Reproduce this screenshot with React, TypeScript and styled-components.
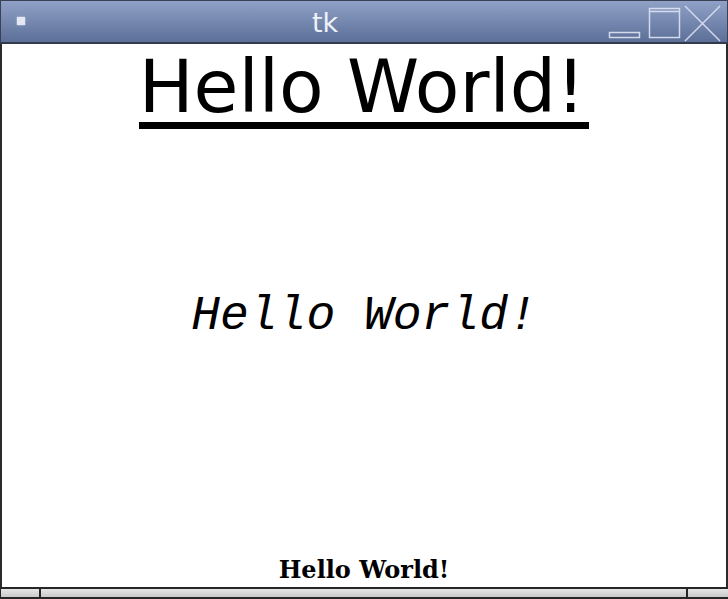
import styled, { createGlobalStyle } from "styled-components";

const GlobalStyle = createGlobalStyle`
  html, body {
    margin: 0;
    padding: 0;
    background: #ffffff;
  }
`;

const Window = styled.div`
  width: 728px;
  height: 599px;
  display: flex;
  flex-direction: column;
  box-sizing: border-box;
  overflow: hidden;
`;

const TitleBar = styled.div`
  height: 44px;
  box-sizing: border-box;
  display: flex;
  align-items: stretch;
  background: linear-gradient(#8fa1c6, #5c6f98);
  border-top: 1px solid #3a4155;
  border-bottom: 2px solid #333a4c;
  border-left: 1px solid #3a4155;
  border-right: 1px solid #3a4155;
`;

const MenuSlot = styled.div`
  width: 40px;
  display: flex;
  align-items: center;
  justify-content: center;
  padding-right: 2px;
  padding-bottom: 2px;
`;

const MenuDot = styled.div`
  width: 8px;
  height: 8px;
  background: #e4e7f4;
  box-shadow: 0 0 2px #e4e7f4;
`;

const Title = styled.div`
  flex: 1;
  text-align: center;
  font-family: "DejaVu Sans", sans-serif;
  font-size: 27px;
  line-height: 44px;
  color: #eef1f8;
`;

const Buttons = styled.div`
  width: 120px;
  display: flex;
  align-items: flex-start;
`;

const Content = styled.div`
  flex: 1;
  display: flex;
  flex-direction: column;
  border-left: 2px solid #2a2a2a;
  border-right: 2px solid #2a2a2a;
  background: #ffffff;
`;

const Heading = styled.div`
  text-align: center;
  padding-top: 7px;
`;

const Underlined = styled.span`
  display: inline-block;
  font-family: "DejaVu Sans", sans-serif;
  font-size: 73px;
  line-height: 71px;
  color: #000000;
  padding-right: 4px;
  border-bottom: 7px solid #000000;
`;

const Middle = styled.div`
  flex: 1;
  display: flex;
  align-items: center;
  justify-content: center;
  padding-bottom: 52px;
`;

const Mono = styled.span`
  font-family: "Liberation Mono", monospace;
  font-style: italic;
  font-size: 48px;
  color: #000000;
`;

const Footer = styled.div`
  text-align: center;
  font-family: "DejaVu Serif", serif;
  font-weight: bold;
  font-size: 24px;
  color: #000000;
  padding-bottom: 3px;
`;

const BottomFrame = styled.div`
  height: 12px;
  box-sizing: border-box;
  display: flex;
  border-top: 2px solid #262626;
  border-bottom: 2px solid #262626;
  background: linear-gradient(#e6e6e6, #c9c9c9);
`;

const FrameSegment = styled.div<{ $w?: number }>`
  ${(p) => (p.$w ? `width: ${p.$w}px;` : "flex: 1;")}
  border-left: 2px solid #262626;
  &:first-child {
    border-left: 1px solid #262626;
  }
`;

function WindowButtons() {
  return (
    <svg width="120" height="42" viewBox="0 0 120 42">
      <g fill="none" stroke="#d9e0f0" strokeWidth="1.5" opacity="0.95">
        <rect x="2.5" y="31.5" width="30" height="5" />
        <rect x="42.5" y="7.5" width="30" height="29" />
        <line x1="42.5" y1="10.5" x2="72.5" y2="10.5" />
        <line x1="78" y1="5" x2="113" y2="40" />
        <line x1="113" y1="5" x2="78" y2="40" />
      </g>
    </svg>
  );
}

export default function App() {
  return (
    <Window>
      <GlobalStyle />
      <TitleBar>
        <MenuSlot>
          <MenuDot />
        </MenuSlot>
        <Title>tk</Title>
        <Buttons>
          <WindowButtons />
        </Buttons>
      </TitleBar>
      <Content>
        <Heading>
          <Underlined>Hello World!</Underlined>
        </Heading>
        <Middle>
          <Mono>Hello World!</Mono>
        </Middle>
        <Footer>Hello World!</Footer>
      </Content>
      <BottomFrame>
        <FrameSegment $w={38} />
        <FrameSegment />
        <FrameSegment $w={40} />
      </BottomFrame>
    </Window>
  );
}
